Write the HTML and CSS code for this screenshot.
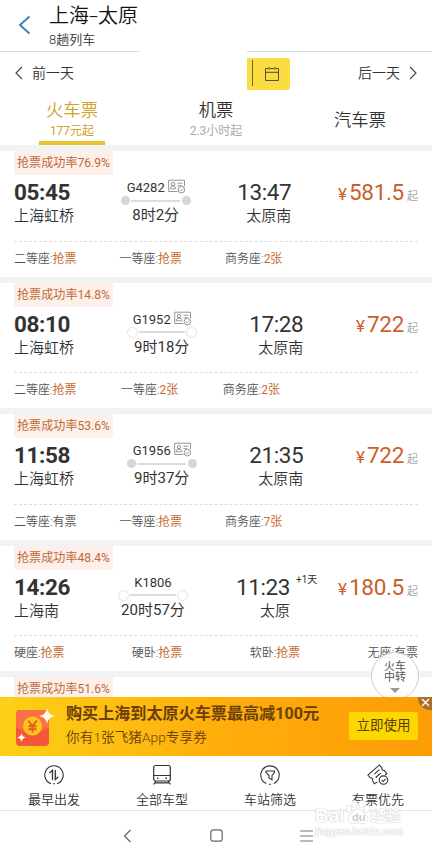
FILE: index.html
```html
<!DOCTYPE html>
<html lang="zh-CN">
<head>
    <meta charset="UTF-8">
    <meta name="viewport" content="width=device-width, initial-scale=1.0">
    <title>上海-太原</title>
    <link rel="stylesheet" href="styles.css">
</head>
<body>
    <!-- shared icons -->
    <svg class="defs" width="0" height="0">
        <symbol id="idcard" viewBox="0 0 18 15">
            <g fill="none" stroke="#8a8a8a" stroke-width="0.9">
                <path d="M9.5 12.5H.7V1.2h15.8v6"/>
                <circle cx="5" cy="5" r="1.7"/>
                <path d="M2.2 9.8c0-1.8 1.2-2.7 2.8-2.7s2.8.9 2.8 2.7zM9.5 4.2h5M9.5 6.7h4"/>
                <circle cx="13.4" cy="10.6" r="3.3"/>
                <path d="M11.8 10.6l1.2 1.2 2.1-2.2"/>
            </g>
        </symbol>
    </svg>

    <div class="page">
        <header class="header">
            <svg class="back" width="14" height="20" viewBox="0 0 14 20"><path d="M11.5 1.5L2 10l9.5 8.5" fill="none" stroke="#3487b8" stroke-width="2"/></svg>
            <div class="header-text">
                <h1>上海<span class="dash">-</span>太原</h1>
                <p>8趟列车</p>
            </div>
        </header>

        <div class="lines"><span class="line-left"></span><span class="line-right"></span></div>

        <div class="days">
            <div class="day">
                <svg width="8" height="14" viewBox="0 0 8 14"><path d="M7 1L1 7l6 6" fill="none" stroke="#444" stroke-width="1.1"/></svg>
                <span>前一天</span>
            </div>
            <div class="calendar">
                <svg width="16" height="16" viewBox="0 0 16 16"><path d="M4 2.5H1.5v12h13v-12H12M6 2.5h4M1.5 6.3h13M5 1v3M11 1v3" fill="none" stroke="#57501c" stroke-width="1"/></svg>
            </div>
            <div class="day day-next">
                <span>后一天</span>
                <svg width="8" height="14" viewBox="0 0 8 14"><path d="M1 1l6 6-6 6" fill="none" stroke="#444" stroke-width="1.1"/></svg>
            </div>
        </div>

        <nav class="tabs">
            <div class="tab active"><b>火车票</b><small>177元起</small></div>
            <div class="tab"><b>机票</b><small>2.3小时起</small></div>
            <div class="tab single"><b>汽车票</b></div>
        </nav>

        <main class="list">
            <section class="card">
                <span class="rate">抢票成功率76.9%</span>
                <div class="route">
                    <div class="depart"><b>05:45</b><span>上海虹桥</span></div>
                    <div class="train">
                        <div class="number with-card">G4282<svg width="18" height="15"><use href="#idcard"/></svg></div>
                        <div class="track full"><i></i><em></em><i></i></div>
                        <div class="duration">8时2分</div>
                    </div>
                    <div class="arrive"><b>13:47</b><span>太原南</span></div>
                    <div class="price"><i>¥</i><b>581.5</b><small>起</small></div>
                </div>
                <div class="seats">
                    <span>二等座:<b>抢票</b></span><span>一等座:<b>抢票</b></span><span>商务座:<b>2张</b></span>
                </div>
            </section>

            <section class="card">
                <span class="rate">抢票成功率14.8%</span>
                <div class="route">
                    <div class="depart"><b>08:10</b><span>上海虹桥</span></div>
                    <div class="train">
                        <div class="number with-card">G1952<svg width="18" height="15"><use href="#idcard"/></svg></div>
                        <div class="track"><i></i><em></em><i></i></div>
                        <div class="duration">9时18分</div>
                    </div>
                    <div class="arrive"><b>17:28</b><span>太原南</span></div>
                    <div class="price"><i>¥</i><b>722</b><small>起</small></div>
                </div>
                <div class="seats wide">
                    <span>二等座:<b>抢票</b></span><span>一等座:<b>2张</b></span><span>商务座:<b>2张</b></span>
                </div>
            </section>

            <section class="card">
                <span class="rate">抢票成功率53.6%</span>
                <div class="route">
                    <div class="depart"><b>11:58</b><span>上海虹桥</span></div>
                    <div class="train">
                        <div class="number with-card">G1956<svg width="18" height="15"><use href="#idcard"/></svg></div>
                        <div class="track full"><i></i><em></em><i></i></div>
                        <div class="duration">9时37分</div>
                    </div>
                    <div class="arrive"><b>21:35</b><span>太原南</span></div>
                    <div class="price"><i>¥</i><b>722</b><small>起</small></div>
                </div>
                <div class="seats">
                    <span>二等座:有票</span><span>一等座:<b>抢票</b></span><span>商务座:<b>7张</b></span>
                </div>
            </section>

            <section class="card">
                <span class="rate">抢票成功率48.4%</span>
                <div class="route">
                    <div class="depart"><b>14:26</b><span>上海南</span></div>
                    <div class="train">
                        <div class="number">K1806</div>
                        <div class="track"><i></i><em></em><i></i></div>
                        <div class="duration">20时57分</div>
                    </div>
                    <div class="arrive"><b>11:23</b><span>太原</span><small class="plus">+1天</small></div>
                    <div class="price"><i>¥</i><b>180.5</b><small>起</small></div>
                </div>
                <div class="seats four">
                    <span>硬座:<b>抢票</b></span><span>硬卧:<b>抢票</b></span><span>软卧:<b>抢票</b></span><span>无座:有票</span>
                </div>
            </section>

            <section class="card">
                <span class="rate">抢票成功率51.6%</span>
            </section>

            <div class="transfer">火车<br>中转<i></i></div>
        </main>

        <div class="banner">
            <svg class="gift" width="42" height="42" viewBox="0 0 42 42">
                <rect x="2" y="4" width="33" height="36" rx="4" fill="#f4573a"/>
                <path d="M2 8a4 4 0 0 1 4-4h25a4 4 0 0 1 4 4v13q-16 11-33 0z" fill="#fa7148"/>
                <circle cx="18.5" cy="20" r="9.5" fill="#fdc516"/>
                <path d="M14.3 14.5l4.2 5.5 4.2-5.5M18.5 20v6.5M14.5 20.2h8M14.5 23.3h8" fill="none" stroke="#e35a25" stroke-width="1.9"/>
                <path d="M33 2q1 7 8 8-7 1-8 8-1-7-8-8 7-1 8-8z" fill="#fffbe0"/>
                <path d="M7.5 27q.6 4 4.5 4.5-3.9.5-4.5 4.5-.6-4-4.5-4.5 3.9-.5 4.5-4.5z" fill="#fffbe0"/>
            </svg>
            <div class="banner-text">
                <b>购买上海到太原火车票最高减100元</b>
                <span>你有1张飞猪App专享券</span>
            </div>
            <div class="use">立即使用</div>
            <div class="close"><svg width="14" height="12" viewBox="0 0 14 12"><path d="M4 2l7 7M11 2L4 9" stroke="#fff" stroke-width="1.4"/></svg></div>
        </div>

        <footer class="filters">
            <div class="filter">
                <svg width="22" height="22" viewBox="0 0 22 22" fill="none" stroke="#333" stroke-width="1.1">
                    <path d="M8 19.7A9.2 9.2 0 1 1 14 19.7M10 19.8h2"/>
                    <path d="M6.5 9l3-2.7v9.7M12.3 6v9.5l3-2.8" stroke-width="1.3"/>
                </svg>
                <span>最早出发</span>
            </div>
            <div class="filter">
                <svg width="22" height="22" viewBox="0 0 22 22" fill="none" stroke="#333" stroke-width="1.2">
                    <rect x="2.7" y="1.5" width="16.6" height="15.5" rx="2"/>
                    <path d="M3 11.5h16M5 17l-2.5 3.5M17 17l2.5 3.5M4 18.8h14"/>
                    <path d="M6 14.3h1.5M14.5 14.3H16" stroke-width="1.6"/>
                </svg>
                <span>全部车型</span>
            </div>
            <div class="filter">
                <svg width="22" height="22" viewBox="0 0 22 22" fill="none" stroke="#333" stroke-width="1.1">
                    <path d="M7.3 19.5A9.2 9.2 0 1 1 14.7 19.5M10 20.2h2"/>
                    <path d="M7 7h8.5v1.3L13 11.5v4.2l-3-1.7v-2.5L7 8.3z"/>
                </svg>
                <span>车站筛选</span>
            </div>
            <div class="filter">
                <svg width="26" height="24" viewBox="0 0 26 24" fill="none" stroke="#333" stroke-width="1.2">
                    <path d="M12.5 19.5l-3.5 2-2-3.5c.8-1.8-.6-3.2-2.5-3L2 12 14.5 1l2.7 3.3c-.5 1.8.8 3 2.6 2.7l2.9 3.5-2 1.7"/>
                    <path d="M9 11l5.500-4.800M10.500 14.700l5.500-4.800"/>
                    <circle cx="19" cy="17.5" r="4.6"/>
                    <path d="M16.9 17.500l1.700 1.600 2.700-2.800"/>
                </svg>
                <span>有票优先</span>
            </div>
        </footer>

        <div class="system">
            <svg width="9" height="14" viewBox="0 0 9 14"><path d="M7.5 1L1.5 7l6 6" fill="none" stroke="#666" stroke-width="1.2"/></svg>
            <svg width="13" height="13" viewBox="0 0 13 13"><rect x=".8" y=".8" width="11.4" height="11.4" rx="2.5" fill="none" stroke="#666" stroke-width="1.2"/></svg>
            <svg width="13" height="12" viewBox="0 0 13 12"><path d="M0 1h13M0 6h13M0 11h13" stroke="#777" stroke-width="1.2"/></svg>
        </div>

        <div class="watermark">
            <div class="mark-logo">
                <span>Bai</span>
                <svg width="26" height="25" viewBox="0 0 26 25">
                    <g fill="#fff" stroke="#ddd" stroke-width=".8">
                        <ellipse cx="4" cy="9" rx="2.8" ry="3.6"/><ellipse cx="9.5" cy="4.3" rx="2.8" ry="3.7"/>
                        <ellipse cx="16.5" cy="4.3" rx="2.8" ry="3.7"/><ellipse cx="22" cy="9" rx="2.8" ry="3.6"/>
                        <path d="M13 9c4 0 5 3.5 8 6 3.5 3 2 8.5-2.5 8.5-2 0-3-.6-5.5-.6s-3.5.6-5.500.6C3 23.5 1.5 18 5 15c3-2.5 4-6 8-6z"/>
                    </g>
                    <text x="7" y="20.5" class="mark-du">du</text>
                </svg>
                <span>经验</span>
            </div>
            <div class="mark-url">jingyan.baidu.com</div>
        </div>
    </div>
</body>
</html>
```
FILE: styles.css
```css
* {
    box-sizing: border-box;
}
body {
    margin: 0;
    font-family: Roboto, "Noto Sans CJK SC", sans-serif;
    font-weight: 400;
    color: #333;
    background: #fff;
}
b, i, em, h1 {
    font-weight: inherit;
    font-style: normal;
}
svg {
    display: block;
    flex: none;
}
.defs {
    position: absolute;
}
.page {
    position: relative;
    display: flex;
    flex-direction: column;
    width: 432px;
    height: 849px;
    overflow: hidden;
    white-space: nowrap;
}

/* header */
.header {
    display: flex;
    height: 51px;
    padding-left: 18px;
}
.back {
    margin-top: 15px;
}
.header-text {
    margin-left: 17px;
}
.header h1 {
    margin: 4px 0 0;
    font-size: 20px;
    font-weight: 350;
    line-height: 25px;
    color: #111;
}
.dash {
    display: inline-block;
    width: 9px;
    text-align: center;
    transform: scaleX(1.6);
}
.header p {
    margin: 2px 0 0;
    font-size: 13px;
    font-weight: 350;
    line-height: 18px;
}
.lines {
    display: flex;
    justify-content: space-between;
    height: 1px;
}
.lines span {
    background: #dcdcdc;
}
.line-left {
    width: 140px;
}
.line-right {
    width: 185px;
}

/* previous / next day */
.days {
    display: flex;
    height: 43px;
    padding: 6px 15px 0;
}
.day {
    display: flex;
    align-items: center;
    gap: 9px;
    width: 232px;
    height: 30px;
    font-size: 14px;
    font-weight: 350;
}
.day span {
    margin-top: -2px;
}
.day-next {
    justify-content: flex-end;
    width: auto;
    margin-left: auto;
}
.calendar {
    display: flex;
    align-items: center;
    width: 43px;
    height: 32px;
    padding-left: 17px;
    border-radius: 0 3px 3px 0;
    background: linear-gradient(#6d6421, #6d6421) 5px 2px / 1px 26px no-repeat #fbdc42;
}

/* tabs */
.tabs {
    display: grid;
    grid-template-columns: repeat(3, 144px);
    height: 50px;
}
.tab {
    display: flex;
    flex-direction: column;
    align-items: center;
    padding-top: 4px;
}
.tab b {
    font-size: 17.3px;
    font-weight: 350;
    line-height: 23px;
}
.tab small {
    font-size: 12px;
    line-height: 18px;
    color: #aaa;
}
.tab.active b,
.tab.active small {
    color: #d0a22a;
}
.tab.active::after {
    content: "";
    width: 66px;
    height: 4px;
    margin-top: 1px;
    background: #e5c431;
}
.tab.single {
    padding-top: 14px;
}

/* train list */
.list {
    position: relative;
    flex: 1;
    min-height: 0;
    overflow: hidden;
    padding-top: 6px;
    background: #f0f2f4;
}
.card {
    height: 125.5px;
    margin-bottom: 6px;
    padding: 0 14px;
    background: #fff;
}
.rate {
    display: block;
    width: 99px;
    height: 24px;
    padding-left: 3px;
    border-radius: 0 0 3px 3px;
    background: #fdf0ea;
    color: #c06a38;
    font-size: 12.1px;
    line-height: 25px;
}
.route {
    display: flex;
    justify-content: space-between;
    height: 66.5px;
    padding-top: 4px;
    border-bottom: 1px dashed #ddd;
}
.depart,
.arrive {
    display: flex;
    flex-direction: column;
}
.arrive {
    position: relative;
    align-items: flex-end;
}
.depart b,
.arrive b {
    font-size: 22.5px;
    line-height: 26px;
    letter-spacing: -0.4px;
}
.depart b {
    font-weight: 700;
}
.depart span,
.arrive span {
    font-size: 15px;
    font-weight: 350;
    line-height: 22px;
}
.plus {
    position: absolute;
    left: 100%;
    top: -1px;
    margin-left: 6px;
    font-size: 10px;
    line-height: 14px;
}
.train {
    display: flex;
    flex-direction: column;
    align-items: center;
    width: 70px;
}
.number {
    display: flex;
    gap: 3px;
    height: 16px;
    font-size: 13px;
    line-height: 17px;
}
.number.with-card {
    padding-left: 1px;
}
.track {
    display: flex;
    align-items: center;
    justify-content: space-between;
    width: 70px;
    height: 11px;
}
.track i {
    width: 11px;
    height: 11px;
    border: 1px solid #e2e2e2;
    border-radius: 50%;
}
.track em {
    width: 46px;
    height: 2px;
    background: #dcdcdc;
}
.track.full i {
    width: 9px;
    height: 9px;
    border: 0;
    background: #d6d6d6;
}
.track.full em {
    width: 49px;
}
.duration {
    font-size: 15px;
    line-height: 19px;
}
.price {
    display: flex;
    align-items: baseline;
    height: 26px;
    color: #c9602a;
    line-height: 26px;
}
.price i {
    margin-right: 2px;
    font-size: 17px;
}
.price b {
    font-size: 22.5px;
    letter-spacing: -0.3px;
}
.price small {
    margin-left: 3px;
    font-size: 11px;
    color: #aaa;
}
.seats {
    display: flex;
    gap: 43px;
    padding-top: 8px;
    font-size: 12px;
    font-weight: 350;
    line-height: 19px;
    color: #555;
}
.seats.wide {
    gap: 44.5px;
}
.seats.four {
    gap: 0;
    justify-content: space-between;
}
.seats b {
    font-weight: 400;
    color: #c9692f;
}
.transfer {
    position: absolute;
    left: 371px;
    top: 507px;
    width: 48px;
    height: 48px;
    padding-top: 8px;
    border: 1px solid #ccc;
    border-radius: 50%;
    background: rgba(255, 255, 255, 0.9);
    color: #555;
    font-size: 11px;
    line-height: 11px;
    text-align: center;
}
.transfer i {
    display: block;
    width: 0;
    margin: 5px auto 0;
    border: 5px solid transparent;
    border-top-color: #999;
    border-bottom: 0;
}

/* coupon banner */
.banner {
    position: relative;
    display: flex;
    height: 59px;
    padding-left: 14px;
    background: linear-gradient(90deg, #fcd018, #ffae0c 50%, #fd9c06);
}
.gift {
    margin-top: 9px;
}
.banner-text {
    display: flex;
    flex-direction: column;
    margin-left: 10px;
    padding-top: 6px;
    color: #6b3f08;
}
.banner-text b {
    font-size: 16.1px;
    font-weight: 700;
    line-height: 22px;
}
.banner-text span {
    font-size: 13.7px;
    font-weight: 350;
    line-height: 25px;
}
.use {
    width: 69px;
    height: 28px;
    margin: 15px 14px 0 auto;
    border-radius: 2px;
    background: #fdd800;
    color: #5a3d05;
    font-size: 13.5px;
    line-height: 27px;
    text-align: center;
}
.close {
    position: absolute;
    right: 0;
    top: 0;
    width: 14px;
    height: 13px;
    border-radius: 0 0 0 12px;
    background: #a9702a;
}

/* bottom bar */
.filters {
    display: grid;
    grid-template-columns: repeat(4, 108px);
    height: 55px;
    border-bottom: 1px solid #e4e4e4;
}
.filter {
    display: flex;
    flex-direction: column;
    align-items: center;
    padding-top: 8px;
    font-size: 13px;
    font-weight: 350;
    line-height: 18px;
}
.filter svg {
    height: 22px;
    margin-bottom: 5px;
}
.system {
    display: flex;
    gap: 78px;
    align-items: center;
    height: 38px;
    padding: 11px 0 0 123px;
}
.system svg:last-child {
    margin-left: -1px;
}

/* watermark */
.watermark {
    position: absolute;
    left: 315px;
    top: 800px;
    color: #fff;
    font-family: "Liberation Sans", "Noto Sans CJK SC", sans-serif;
    font-weight: 700;
    text-shadow: 0 0 1px #bbb, 0 0 2px #ddd;
}
.mark-logo {
    display: flex;
    align-items: flex-end;
    height: 25px;
    font-size: 15px;
    line-height: 18px;
}
.mark-logo span:first-child {
    font-size: 19px;
}
.mark-du {
    fill: #ccc;
    font-size: 11px;
    text-shadow: none;
}
.mark-url {
    font-size: 10px;
    line-height: 13px;
}
```
